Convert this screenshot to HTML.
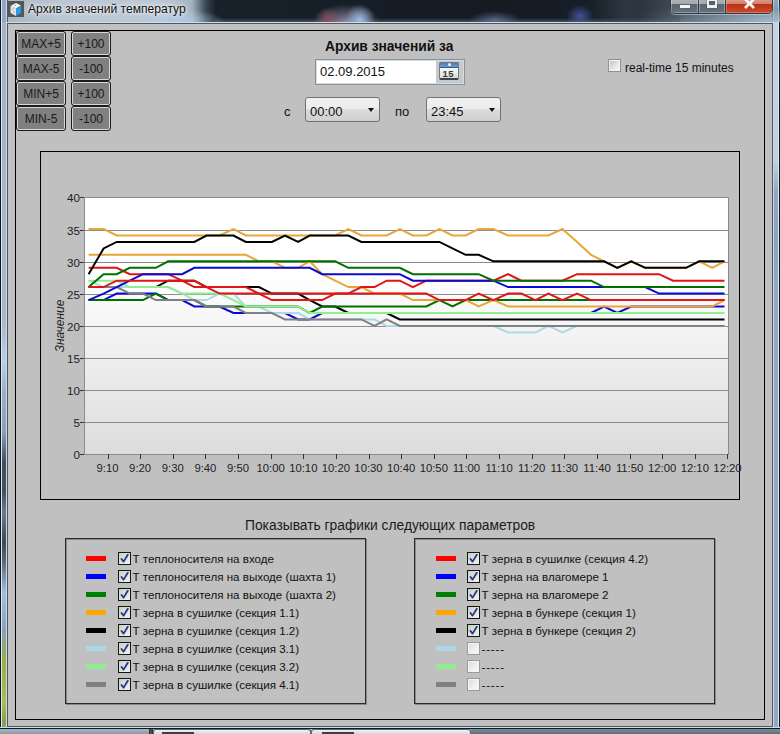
<!DOCTYPE html>
<html><head><meta charset="utf-8"><style>
*{box-sizing:border-box;margin:0;padding:0}
html,body{width:780px;height:734px;overflow:hidden}
body{position:relative;background:#c0c0c0;font-family:"Liberation Sans",sans-serif;color:#111}
.a{position:absolute}
.t{position:absolute;white-space:nowrap;line-height:1}
#title{left:0;top:0;width:780px;height:23px;background:radial-gradient(ellipse 45px 12px at 180px 21px,rgba(175,205,235,.85),rgba(175,205,235,0)),linear-gradient(90deg,#a8b4c0 0,#bac6d2 60px,#bcc8d4 165px,#a4b2c0 192px,#3a4652 206px,#18202a 216px,#141b23 500px,#18202a 640px,#5a6874 700px,#8a9cac 780px)}
#titlebot{left:215px;top:18px;width:565px;height:5px;background:linear-gradient(180deg,rgba(140,160,180,0) 0,rgba(150,170,190,.45) 100%)}
#lf{left:0;top:0;width:8px;height:734px;background:linear-gradient(90deg,#10161c 0,#10161c 1px,#d8e8f8 1px,#d8e8f8 2px,#90a8c4 2px,#90a8c4 6px,#c8d8e8 6px,#c8d8e8 7px,#50585e 7px,#50585e 8px)}
#rf{left:772px;top:0;width:8px;height:734px;background:linear-gradient(90deg,#50585e 0,#50585e 1px,#c8d8e8 1px,#c8d8e8 2px,#90a8c4 2px,#90a8c4 6px,#d8e8f8 6px,#d8e8f8 7px,#10161c 7px)}
#client{left:8px;top:23px;width:764px;height:704px;background:#c0c0c0;border-top:1px solid #505860}
#ctop{left:7px;top:22px;width:766px;height:1px;background:#d0dce8}
#outer{left:15px;top:30px;width:750px;height:690px;border:1px solid #000}
.btn{position:absolute;height:25px;border:1px solid #1c1c1c;border-radius:3px;background:#808080;box-shadow:inset 0 0 0 1px #d8d8d8;font-size:12px;text-align:center;line-height:23px;padding-top:1px;color:#1a1a1a}
.cb{width:13px;height:13px;border:1.5px solid #0e1a0e;background:linear-gradient(135deg,#c8d0c8,#f0f4f0)}
.cbu{width:13px;height:13px;border:1px solid #9a9a9a;box-shadow:inset 0 0 0 1px #f4f4f4;background:linear-gradient(135deg,#d8dadc,#f0f0f0 60%,#fafafa)}
</style></head><body>
<div id="title" class="a"></div><div id="titlebot" class="a"></div><div id="lf" class="a"></div><div id="rf" class="a"></div>
<div class="a" style="left:2px;top:22px;width:4px;height:705px;background:linear-gradient(180deg,#a4b4c4 0,#a8b8c8 300px,#b8d0e8 340px,#9ab0c8 370px,#8aa0b8 410px,#40505c 440px,#44525e 470px,#6a7c8c 490px,#3c4a58 520px,#5a6a78 540px,#a0c0e0 570px,#8aa0b8 610px,#98b040 640px,#a8c050 680px,#8aa048 700px,#8aa0b8 712px)"></div>
<div class="a" style="left:774px;top:22px;width:4px;height:705px;background:linear-gradient(180deg,#c4d4e4 0,#c0d0e0 140px,#90a8c0 170px,#8aa4bc 220px,#90a8c4 260px,#90a8c4 712px)"></div>
<div class="a" style="left:640px;top:0;width:140px;height:22px;background:radial-gradient(ellipse at 100% 100%,rgba(170,190,205,.9) 0,rgba(120,140,155,.5) 40%,rgba(20,28,36,0) 75%)"></div>
<div class="a" style="left:310px;top:2px;width:70px;height:20px;background:radial-gradient(ellipse 12px 10px at 18px 16px,rgba(150,80,90,.75),rgba(150,80,90,0)),radial-gradient(ellipse 15px 16px at 50px 18px,rgba(160,195,235,.95),rgba(160,195,235,0)),radial-gradient(ellipse 34px 17px at 36px 19px,rgba(150,140,170,.85),rgba(150,140,170,0))"></div>
<div class="a" style="left:460px;top:6px;width:70px;height:16px;background:radial-gradient(ellipse 26px 9px at 35px 14px,rgba(130,140,190,.6),rgba(130,140,190,0))"></div>
<div class="a" style="left:560px;top:2px;width:40px;height:20px;background:radial-gradient(ellipse 14px 11px at 20px 14px,rgba(80,100,190,.75),rgba(80,100,190,0))"></div>
<div class="a" style="left:590px;top:0;width:90px;height:22px;background:linear-gradient(90deg,rgba(70,80,90,0),rgba(70,80,90,.5) 40%,rgba(70,80,90,.3))"></div>
<div class="a" style="left:8px;top:1px;width:16px;height:16px;background:#545658"></div>
<svg class="a" style="left:8px;top:1px" width="16" height="16" viewBox="0 0 16 16">
<path d="M2.5 5 L8 2 L13 4.5 L8 7.5 Z" fill="#f4f4f4"/>
<path d="M2.5 5 L8 7.5 L8 15 L2.5 12 Z" fill="#e6e6e6"/>
<path d="M8 7.5 L13 4.5 L13 12 L8 15 Z" fill="#2a9be0"/>
<circle cx="5" cy="8" r=".6" fill="#777"/><circle cx="6" cy="11" r=".6" fill="#777"/><circle cx="7.5" cy="4.5" r=".6" fill="#777"/>
</svg>
<div class="t" style="left:28px;top:3px;font-size:12.1px;color:#111;text-shadow:0 0 6px #fff,0 0 3px #fff">Архив значений температур</div>
<div class="a" style="left:670px;top:-3px;width:103px;height:17px;border:1px solid #2e3a46;border-radius:0 0 5px 5px;overflow:hidden;box-shadow:0 1px 0 rgba(220,230,240,.5)">
 <div class="a" style="left:0;top:0;width:28px;height:15px;background:linear-gradient(180deg,#b0b6bc 0,#a0a8ae 6px,#5c6670 6.5px,#66707a 100%);border-right:1px solid #2e3a46;box-shadow:inset 0 0 0 1px rgba(255,255,255,.3)"></div>
 <div class="a" style="left:28px;top:0;width:27px;height:15px;background:linear-gradient(180deg,#b0b6bc 0,#a0a8ae 6px,#5c6670 6.5px,#66707a 100%);border-right:1px solid #2e3a46;box-shadow:inset 0 0 0 1px rgba(255,255,255,.3)"></div>
 <div class="a" style="left:55px;top:0;width:48px;height:15px;background:linear-gradient(180deg,#e0a090 0,#d08068 6px,#b83418 6.5px,#d04828 100%);box-shadow:inset 0 0 0 1px rgba(255,200,180,.35)"></div>
</div>
<div class="a" style="left:680px;top:5px;width:10px;height:3px;background:#f4f4f4;box-shadow:0 0 1px #333"></div>
<div class="a" style="left:707px;top:-1px;width:10px;height:9px;border:2px solid #f0f0f0;border-bottom-width:3px;background:#56606a;box-shadow:0 0 1px #333"></div>
<svg class="a" style="left:743px;top:-2px" width="13" height="11" viewBox="0 0 13 11"><path d="M2 1 L11 10 M11 1 L2 10" stroke="#f8f8f8" stroke-width="2.6"/></svg>
<div id="ctop" class="a"></div><div id="client" class="a"></div><div id="outer" class="a"></div>

<div class="btn" style="left:16px;top:31px;width:50px">MAX+5</div><div class="btn" style="left:71px;top:31px;width:40px">+100</div>
<div class="btn" style="left:16px;top:56px;width:50px">MAX-5</div><div class="btn" style="left:71px;top:56px;width:40px">-100</div>
<div class="btn" style="left:16px;top:81px;width:50px">MIN+5</div><div class="btn" style="left:71px;top:81px;width:40px">+100</div>
<div class="btn" style="left:16px;top:106px;width:50px">MIN-5</div><div class="btn" style="left:71px;top:106px;width:40px">-100</div>

<div class="t" style="left:325px;top:40px;font-size:13.8px;font-weight:bold;color:#111">Архив значений за</div>
<div class="a" style="left:315px;top:59px;width:150px;height:26px;border:1px solid #8494a4;background:#c6cacd;box-shadow:inset 0 0 0 1px #d8dcdf"></div>
<div class="a" style="left:317px;top:61px;width:119px;height:22px;background:#fff"></div>
<div class="t" style="left:320px;top:65px;font-size:13px">02.09.2015</div>
<div class="a" style="left:439px;top:62px;width:20px;height:18px;border:1px solid #707880;border-bottom:2px solid #3c4248;border-radius:2px;background:linear-gradient(180deg,#4a7cb8 0,#6a9ad0 4px,#3a5a80 4px,#3a5a80 5px,#f8f8f8 5px,#dcdcdc 100%)"></div>
<div class="a" style="left:448px;top:63px;width:3px;height:3px;border-radius:50%;background:#f0f4f8"></div>
<div class="t" style="left:442.5px;top:69px;font-size:9.5px;font-weight:bold;color:#3a3a3a;letter-spacing:.5px">15</div>
<div class="t" style="left:284px;top:105px;font-size:13px">с</div>
<div class="a" style="left:305px;top:97px;width:75px;height:25px;border:1px solid #707070;border-radius:3px;background:linear-gradient(180deg,#f2f2f2 0,#ebebeb 50%,#dddddd 50%,#cfcfcf 100%)"></div>
<div class="t" style="left:310px;top:105px;font-size:13px">00:00</div>
<div class="a" style="left:368px;top:108px;width:0;height:0;border-left:3.5px solid transparent;border-right:3.5px solid transparent;border-top:4px solid #111"></div>
<div class="t" style="left:395px;top:105px;font-size:13px">по</div>
<div class="a" style="left:426px;top:97px;width:75px;height:25px;border:1px solid #707070;border-radius:3px;background:linear-gradient(180deg,#f2f2f2 0,#ebebeb 50%,#dddddd 50%,#cfcfcf 100%)"></div>
<div class="t" style="left:431px;top:105px;font-size:13px">23:45</div>
<div class="a" style="left:489px;top:108px;width:0;height:0;border-left:3.5px solid transparent;border-right:3.5px solid transparent;border-top:4px solid #111"></div>
<div class="a" style="left:608px;top:59px;width:13px;height:13px;border:1px solid #8e8f8f;box-shadow:inset 0 0 0 1px #f4f4f4;background:linear-gradient(135deg,#b8bcc0,#e8eaec 60%,#f8f8f8)"></div>
<div class="t" style="left:625px;top:61.5px;font-size:12px">real-time 15 minutes</div>
<div class="a" style="left:40px;top:151px;width:700px;height:349px;border:1px solid #000"></div>

<svg class="a" style="left:0;top:0" width="780" height="734" shape-rendering="crispEdges">
<defs><linearGradient id="bg" x1="0" y1="0" x2="0" y2="1"><stop offset="0" stop-color="#fff"/><stop offset="0.30" stop-color="#fff"/><stop offset="1" stop-color="#dcdcdc"/></linearGradient></defs>
<rect x="85" y="197" width="643" height="257" fill="url(#bg)"/>
<line x1="84" y1="454.5" x2="729" y2="454.5" stroke="#8c8c8c"/>
<line x1="80" y1="454.5" x2="84" y2="454.5" stroke="#333"/>
<line x1="84" y1="422.5" x2="729" y2="422.5" stroke="#8c8c8c"/>
<line x1="80" y1="422.5" x2="84" y2="422.5" stroke="#333"/>
<line x1="84" y1="390.5" x2="729" y2="390.5" stroke="#8c8c8c"/>
<line x1="80" y1="390.5" x2="84" y2="390.5" stroke="#333"/>
<line x1="84" y1="358.5" x2="729" y2="358.5" stroke="#8c8c8c"/>
<line x1="80" y1="358.5" x2="84" y2="358.5" stroke="#333"/>
<line x1="84" y1="326.5" x2="729" y2="326.5" stroke="#8c8c8c"/>
<line x1="80" y1="326.5" x2="84" y2="326.5" stroke="#333"/>
<line x1="84" y1="294.5" x2="729" y2="294.5" stroke="#8c8c8c"/>
<line x1="80" y1="294.5" x2="84" y2="294.5" stroke="#333"/>
<line x1="84" y1="262.5" x2="729" y2="262.5" stroke="#8c8c8c"/>
<line x1="80" y1="262.5" x2="84" y2="262.5" stroke="#333"/>
<line x1="84" y1="230.5" x2="729" y2="230.5" stroke="#8c8c8c"/>
<line x1="80" y1="230.5" x2="84" y2="230.5" stroke="#333"/>
<line x1="84" y1="197.5" x2="729" y2="197.5" stroke="#8c8c8c"/>
<line x1="80" y1="197.5" x2="84" y2="197.5" stroke="#333"/>
<line x1="84.5" y1="197" x2="84.5" y2="455" stroke="#8c8c8c"/>
<line x1="728.5" y1="197" x2="728.5" y2="455" stroke="#8c8c8c"/>
<line x1="108.5" y1="454" x2="108.5" y2="459" stroke="#333"/>
<line x1="140.5" y1="454" x2="140.5" y2="459" stroke="#333"/>
<line x1="173.5" y1="454" x2="173.5" y2="459" stroke="#333"/>
<line x1="205.5" y1="454" x2="205.5" y2="459" stroke="#333"/>
<line x1="238.5" y1="454" x2="238.5" y2="459" stroke="#333"/>
<line x1="271.5" y1="454" x2="271.5" y2="459" stroke="#333"/>
<line x1="303.5" y1="454" x2="303.5" y2="459" stroke="#333"/>
<line x1="336.5" y1="454" x2="336.5" y2="459" stroke="#333"/>
<line x1="369.5" y1="454" x2="369.5" y2="459" stroke="#333"/>
<line x1="401.5" y1="454" x2="401.5" y2="459" stroke="#333"/>
<line x1="434.5" y1="454" x2="434.5" y2="459" stroke="#333"/>
<line x1="466.5" y1="454" x2="466.5" y2="459" stroke="#333"/>
<line x1="499.5" y1="454" x2="499.5" y2="459" stroke="#333"/>
<line x1="532.5" y1="454" x2="532.5" y2="459" stroke="#333"/>
<line x1="564.5" y1="454" x2="564.5" y2="459" stroke="#333"/>
<line x1="597.5" y1="454" x2="597.5" y2="459" stroke="#333"/>
<line x1="630.5" y1="454" x2="630.5" y2="459" stroke="#333"/>
<line x1="662.5" y1="454" x2="662.5" y2="459" stroke="#333"/>
<line x1="695.5" y1="454" x2="695.5" y2="459" stroke="#333"/>
<line x1="727.5" y1="454" x2="727.5" y2="459" stroke="#333"/>
</svg>
<div class="t" style="right:700px;top:449px;font-size:11.6px;color:#222">0</div>
<div class="t" style="right:700px;top:417px;font-size:11.6px;color:#222">5</div>
<div class="t" style="right:700px;top:385px;font-size:11.6px;color:#222">10</div>
<div class="t" style="right:700px;top:353px;font-size:11.6px;color:#222">15</div>
<div class="t" style="right:700px;top:321px;font-size:11.6px;color:#222">20</div>
<div class="t" style="right:700px;top:289px;font-size:11.6px;color:#222">25</div>
<div class="t" style="right:700px;top:257px;font-size:11.6px;color:#222">30</div>
<div class="t" style="right:700px;top:225px;font-size:11.6px;color:#222">35</div>
<div class="t" style="right:700px;top:192px;font-size:11.6px;color:#222">40</div>
<div class="t" style="left:77.5px;width:60px;text-align:center;top:463px;font-size:11.3px;color:#222">9:10</div>
<div class="t" style="left:110.1px;width:60px;text-align:center;top:463px;font-size:11.3px;color:#222">9:20</div>
<div class="t" style="left:142.8px;width:60px;text-align:center;top:463px;font-size:11.3px;color:#222">9:30</div>
<div class="t" style="left:175.4px;width:60px;text-align:center;top:463px;font-size:11.3px;color:#222">9:40</div>
<div class="t" style="left:208.0px;width:60px;text-align:center;top:463px;font-size:11.3px;color:#222">9:50</div>
<div class="t" style="left:240.6px;width:60px;text-align:center;top:463px;font-size:11.3px;color:#222">10:00</div>
<div class="t" style="left:273.3px;width:60px;text-align:center;top:463px;font-size:11.3px;color:#222">10:10</div>
<div class="t" style="left:305.9px;width:60px;text-align:center;top:463px;font-size:11.3px;color:#222">10:20</div>
<div class="t" style="left:338.5px;width:60px;text-align:center;top:463px;font-size:11.3px;color:#222">10:30</div>
<div class="t" style="left:371.2px;width:60px;text-align:center;top:463px;font-size:11.3px;color:#222">10:40</div>
<div class="t" style="left:403.8px;width:60px;text-align:center;top:463px;font-size:11.3px;color:#222">10:50</div>
<div class="t" style="left:436.4px;width:60px;text-align:center;top:463px;font-size:11.3px;color:#222">11:00</div>
<div class="t" style="left:469.1px;width:60px;text-align:center;top:463px;font-size:11.3px;color:#222">11:10</div>
<div class="t" style="left:501.7px;width:60px;text-align:center;top:463px;font-size:11.3px;color:#222">11:20</div>
<div class="t" style="left:534.3px;width:60px;text-align:center;top:463px;font-size:11.3px;color:#222">11:30</div>
<div class="t" style="left:567.0px;width:60px;text-align:center;top:463px;font-size:11.3px;color:#222">11:40</div>
<div class="t" style="left:599.6px;width:60px;text-align:center;top:463px;font-size:11.3px;color:#222">11:50</div>
<div class="t" style="left:632.2px;width:60px;text-align:center;top:463px;font-size:11.3px;color:#222">12:00</div>
<div class="t" style="left:664.8px;width:60px;text-align:center;top:463px;font-size:11.3px;color:#222">12:10</div>
<div class="t" style="left:697.5px;width:60px;text-align:center;top:463px;font-size:11.3px;color:#222">12:20</div>
<div class="t" style="left:60px;top:326px;font-size:12px;font-style:italic;color:#222;transform:translate(-50%,-50%) rotate(-90deg)">Значение</div>
<svg class="a" style="left:0;top:0" width="780" height="734"><polyline points="88.6,287.1 103.6,287.1 116.7,287.1 129.8,287.1 142.9,287.1 155.9,287.1 168.2,280.7 182.1,280.7 194.3,280.7 206.5,287.1 219.5,287.1 233.5,287.1 245.8,287.1 258.9,287.1 271.9,293.6 285.0,293.6 298.1,293.6 309.7,300.1 322.2,306.5 335.2,306.5 348.3,313.0 361.4,313.0 374.5,313.0 386.7,313.0 399.8,319.4 412.9,319.4 426.3,319.4 439.4,319.4 452.5,319.4 465.6,319.4 478.7,319.4 493.4,319.4 508.1,319.4 521.3,319.4 535.4,319.4 548.5,319.4 562.4,319.4 577.1,319.4 591.0,319.4 604.1,319.4 617.3,319.4 631.2,319.4 645.2,319.4 659.1,319.4 673.0,319.4 686.1,319.4 699.2,319.4 712.3,319.4 724.5,319.4" fill="none" stroke="#000000" stroke-width="2"/>
<polyline points="88.6,300.1 103.6,300.1 116.7,293.6 129.8,293.6 142.9,293.6 155.9,293.6 168.2,300.1 182.1,300.1 194.3,306.5 206.5,306.5 219.5,306.5 233.5,313.0 245.8,313.0 258.9,313.0 271.9,313.0 285.0,313.0 298.1,319.4 309.7,319.4 322.2,313.0 335.2,313.0 348.3,313.0 361.4,313.0 374.5,313.0 386.7,313.0 399.8,313.0 412.9,313.0 426.3,313.0 439.4,313.0 452.5,313.0 465.6,313.0 478.7,313.0 493.4,313.0 508.1,313.0 521.3,313.0 535.4,313.0 548.5,313.0 562.4,313.0 577.1,313.0 591.0,313.0 604.1,306.5 617.3,313.0 631.2,306.5 645.2,306.5 659.1,306.5 673.0,306.5 686.1,306.5 699.2,306.5 712.3,306.5 724.5,306.5" fill="none" stroke="#0A0AD0" stroke-width="2"/>
<polyline points="88.6,280.7 103.6,287.1 116.7,287.1 129.8,287.1 142.9,287.1 155.9,287.1 168.2,287.1 182.1,293.6 194.3,300.1 206.5,300.1 219.5,293.6 233.5,293.6 245.8,306.5 258.9,306.5 271.9,313.0 285.0,313.0 298.1,313.0 309.7,319.4 322.2,319.4 335.2,319.4 348.3,319.4 361.4,319.4 374.5,319.4 386.7,325.9 399.8,325.9 412.9,325.9 426.3,325.9 439.4,325.9 452.5,325.9 465.6,325.9 478.7,325.9 493.4,325.9 508.1,332.4 521.3,332.4 535.4,332.4 548.5,325.9 562.4,332.4 577.1,325.9 591.0,325.9 604.1,325.9 617.3,325.9 631.2,325.9 645.2,325.9 659.1,325.9 673.0,325.9 686.1,325.9 699.2,325.9 712.3,325.9 724.5,325.9" fill="none" stroke="#ADD8E6" stroke-width="2"/>
<polyline points="88.6,300.1 103.6,300.1 116.7,300.1 129.8,300.1 142.9,300.1 155.9,293.6 168.2,300.1 182.1,300.1 194.3,300.1 206.5,306.5 219.5,306.5 233.5,306.5 245.8,306.5 258.9,306.5 271.9,306.5 285.0,306.5 298.1,306.5 309.7,313.0 322.2,306.5 335.2,306.5 348.3,306.5 361.4,306.5 374.5,306.5 386.7,306.5 399.8,306.5 412.9,306.5 426.3,306.5 439.4,300.1 452.5,306.5 465.6,300.1 478.7,300.1 493.4,300.1 508.1,300.1 521.3,300.1 535.4,300.1 548.5,300.1 562.4,300.1 577.1,300.1 591.0,300.1 604.1,300.1 617.3,300.1 631.2,300.1 645.2,300.1 659.1,300.1 673.0,300.1 686.1,300.1 699.2,300.1 712.3,300.1 724.5,300.1" fill="none" stroke="#007000" stroke-width="2"/>
<polyline points="88.6,229.0 103.6,229.0 116.7,235.5 129.8,235.5 142.9,235.5 155.9,235.5 168.2,235.5 182.1,235.5 194.3,235.5 206.5,235.5 219.5,235.5 233.5,229.0 245.8,235.5 258.9,235.5 271.9,235.5 285.0,235.5 298.1,235.5 309.7,235.5 322.2,235.5 335.2,235.5 348.3,229.0 361.4,235.5 374.5,235.5 386.7,235.5 399.8,229.0 412.9,235.5 426.3,235.5 439.4,229.0 452.5,235.5 465.6,235.5 478.7,229.0 493.4,229.0 508.1,235.5 521.3,235.5 535.4,235.5 548.5,235.5 562.4,229.0 577.1,241.9 591.0,254.8 604.1,261.3 617.3,267.8 631.2,261.3 645.2,267.8 659.1,267.8 673.0,267.8 686.1,267.8 699.2,261.3 712.3,267.8 724.5,261.3" fill="none" stroke="#EAA53A" stroke-width="2"/>
<polyline points="88.6,287.1 103.6,287.1 116.7,287.1 129.8,293.6 142.9,293.6 155.9,300.1 168.2,300.1 182.1,300.1 194.3,300.1 206.5,306.5 219.5,306.5 233.5,306.5 245.8,313.0 258.9,313.0 271.9,313.0 285.0,319.4 298.1,319.4 309.7,319.4 322.2,319.4 335.2,319.4 348.3,319.4 361.4,319.4 374.5,325.9 386.7,319.4 399.8,325.9 412.9,325.9 426.3,325.9 439.4,325.9 452.5,325.9 465.6,325.9 478.7,325.9 493.4,325.9 508.1,325.9 521.3,325.9 535.4,325.9 548.5,325.9 562.4,325.9 577.1,325.9 591.0,325.9 604.1,325.9 617.3,325.9 631.2,325.9 645.2,325.9 659.1,325.9 673.0,325.9 686.1,325.9 699.2,325.9 712.3,325.9 724.5,325.9" fill="none" stroke="#808080" stroke-width="2"/>
<polyline points="88.6,280.7 103.6,280.7 116.7,280.7 129.8,287.1 142.9,287.1 155.9,287.1 168.2,287.1 182.1,293.6 194.3,293.6 206.5,293.6 219.5,293.6 233.5,300.1 245.8,306.5 258.9,306.5 271.9,306.5 285.0,306.5 298.1,306.5 309.7,313.0 322.2,313.0 335.2,313.0 348.3,313.0 361.4,313.0 374.5,313.0 386.7,313.0 399.8,313.0 412.9,313.0 426.3,313.0 439.4,313.0 452.5,313.0 465.6,313.0 478.7,313.0 493.4,313.0 508.1,313.0 521.3,313.0 535.4,313.0 548.5,313.0 562.4,313.0 577.1,313.0 591.0,313.0 604.1,313.0 617.3,313.0 631.2,313.0 645.2,313.0 659.1,313.0 673.0,313.0 686.1,313.0 699.2,313.0 712.3,313.0 724.5,313.0" fill="none" stroke="#90EE90" stroke-width="2"/>
<polyline points="88.6,254.8 103.6,254.8 116.7,254.8 129.8,254.8 142.9,254.8 155.9,254.8 168.2,254.8 182.1,254.8 194.3,254.8 206.5,254.8 219.5,254.8 233.5,254.8 245.8,254.8 258.9,261.3 271.9,261.3 285.0,267.8 298.1,267.8 309.7,261.3 322.2,274.2 335.2,280.7 348.3,287.1 361.4,287.1 374.5,293.6 386.7,293.6 399.8,293.6 412.9,300.1 426.3,300.1 439.4,300.1 452.5,300.1 465.6,300.1 478.7,306.5 493.4,300.1 508.1,306.5 521.3,306.5 535.4,306.5 548.5,306.5 562.4,306.5 577.1,306.5 591.0,306.5 604.1,306.5 617.3,306.5 631.2,306.5 645.2,306.5 659.1,306.5 673.0,306.5 686.1,306.5 699.2,306.5 712.3,306.5 724.5,300.1" fill="none" stroke="#EAA53A" stroke-width="2"/>
<polyline points="88.6,267.8 103.6,267.8 116.7,267.8 129.8,274.2 142.9,274.2 155.9,274.2 168.2,274.2 182.1,280.7 194.3,287.1 206.5,287.1 219.5,287.1 233.5,287.1 245.8,287.1 258.9,293.6 271.9,300.1 285.0,300.1 298.1,300.1 309.7,300.1 322.2,300.1 335.2,293.6 348.3,293.6 361.4,287.1 374.5,287.1 386.7,280.7 399.8,280.7 412.9,287.1 426.3,280.7 439.4,280.7 452.5,280.7 465.6,280.7 478.7,280.7 493.4,280.7 508.1,274.2 521.3,280.7 535.4,280.7 548.5,280.7 562.4,280.7 577.1,274.2 591.0,274.2 604.1,274.2 617.3,274.2 631.2,274.2 645.2,274.2 659.1,274.2 673.0,280.7 686.1,280.7 699.2,280.7 712.3,280.7 724.5,280.7" fill="none" stroke="#E01515" stroke-width="2"/>
<polyline points="88.6,300.1 103.6,293.6 116.7,287.1 129.8,280.7 142.9,274.2 155.9,274.2 168.2,274.2 182.1,274.2 194.3,267.8 206.5,267.8 219.5,267.8 233.5,267.8 245.8,267.8 258.9,267.8 271.9,267.8 285.0,267.8 298.1,267.8 309.7,267.8 322.2,274.2 335.2,274.2 348.3,274.2 361.4,274.2 374.5,274.2 386.7,274.2 399.8,274.2 412.9,280.7 426.3,280.7 439.4,280.7 452.5,280.7 465.6,280.7 478.7,280.7 493.4,280.7 508.1,287.1 521.3,287.1 535.4,287.1 548.5,287.1 562.4,287.1 577.1,287.1 591.0,287.1 604.1,287.1 617.3,287.1 631.2,287.1 645.2,287.1 659.1,293.6 673.0,293.6 686.1,293.6 699.2,293.6 712.3,293.6 724.5,293.6" fill="none" stroke="#0A0AD0" stroke-width="2"/>
<polyline points="88.6,287.1 103.6,274.2 116.7,274.2 129.8,267.8 142.9,267.8 155.9,267.8 168.2,261.3 182.1,261.3 194.3,261.3 206.5,261.3 219.5,261.3 233.5,261.3 245.8,261.3 258.9,261.3 271.9,261.3 285.0,261.3 298.1,261.3 309.7,261.3 322.2,261.3 335.2,261.3 348.3,267.8 361.4,267.8 374.5,267.8 386.7,267.8 399.8,267.8 412.9,274.2 426.3,274.2 439.4,274.2 452.5,274.2 465.6,274.2 478.7,274.2 493.4,280.7 508.1,280.7 521.3,280.7 535.4,280.7 548.5,280.7 562.4,280.7 577.1,280.7 591.0,280.7 604.1,287.1 617.3,287.1 631.2,287.1 645.2,287.1 659.1,287.1 673.0,287.1 686.1,287.1 699.2,287.1 712.3,287.1 724.5,287.1" fill="none" stroke="#007000" stroke-width="2"/>
<polyline points="88.6,287.1 103.6,287.1 116.7,280.7 129.8,280.7 142.9,280.7 155.9,280.7 168.2,280.7 182.1,280.7 194.3,280.7 206.5,287.1 219.5,293.6 233.5,293.6 245.8,293.6 258.9,293.6 271.9,293.6 285.0,293.6 298.1,293.6 309.7,293.6 322.2,293.6 335.2,293.6 348.3,293.6 361.4,293.6 374.5,293.6 386.7,293.6 399.8,293.6 412.9,293.6 426.3,293.6 439.4,300.1 452.5,300.1 465.6,300.1 478.7,293.6 493.4,300.1 508.1,293.6 521.3,293.6 535.4,300.1 548.5,293.6 562.4,300.1 577.1,293.6 591.0,300.1 604.1,300.1 617.3,300.1 631.2,300.1 645.2,300.1 659.1,300.1 673.0,300.1 686.1,300.1 699.2,300.1 712.3,300.1 724.5,300.1" fill="none" stroke="#E01515" stroke-width="2"/>
<polyline points="88.6,274.2 103.6,248.4 116.7,241.9 129.8,241.9 142.9,241.9 155.9,241.9 168.2,241.9 182.1,241.9 194.3,241.9 206.5,235.5 219.5,235.5 233.5,235.5 245.8,241.9 258.9,241.9 271.9,241.9 285.0,235.5 298.1,241.9 309.7,235.5 322.2,235.5 335.2,235.5 348.3,235.5 361.4,241.9 374.5,241.9 386.7,241.9 399.8,241.9 412.9,241.9 426.3,241.9 439.4,241.9 452.5,248.4 465.6,254.8 478.7,254.8 493.4,261.3 508.1,261.3 521.3,261.3 535.4,261.3 548.5,261.3 562.4,261.3 577.1,261.3 591.0,261.3 604.1,261.3 617.3,267.8 631.2,261.3 645.2,267.8 659.1,267.8 673.0,267.8 686.1,267.8 699.2,261.3 712.3,261.3 724.5,261.3" fill="none" stroke="#000000" stroke-width="2"/>
</svg>
<div class="t" style="left:245px;top:519px;font-size:13.8px;color:#1a1a1a">Показывать графики следующих параметров</div>
<div class="a" style="left:65px;top:538px;width:301px;height:166px;border:1px solid #2a2a2a;box-shadow:inset 1px 1px 0 #888, 1px 1px 0 #888"></div>
<div class="a" style="left:414px;top:538px;width:301px;height:166px;border:1px solid #2a2a2a;box-shadow:inset 1px 1px 0 #888, 1px 1px 0 #888"></div>
<div class="a" style="left:86px;top:555.5px;width:20px;height:5px;background:#ff0000"></div>
<div class="a cb" style="left:118px;top:552px"><svg width="9" height="9" viewBox="0 0 9 9" style="position:absolute;left:1px;top:1px"><path d="M1.5 5 L3.6 7.6 L7.8 0.8" fill="none" stroke="#2a3488" stroke-width="1.8" stroke-linecap="round" stroke-linejoin="round"/></svg></div>
<div class="t" style="left:132.5px;top:552.8px;font-size:11.6px;color:#111;letter-spacing:0">Т теплоносителя на входе</div>
<div class="a" style="left:86px;top:573.5px;width:20px;height:5px;background:#0000ff"></div>
<div class="a cb" style="left:118px;top:570px"><svg width="9" height="9" viewBox="0 0 9 9" style="position:absolute;left:1px;top:1px"><path d="M1.5 5 L3.6 7.6 L7.8 0.8" fill="none" stroke="#2a3488" stroke-width="1.8" stroke-linecap="round" stroke-linejoin="round"/></svg></div>
<div class="t" style="left:132.5px;top:570.8px;font-size:11.6px;color:#111;letter-spacing:0">Т теплоносителя на выходе (шахта 1)</div>
<div class="a" style="left:86px;top:591.5px;width:20px;height:5px;background:#008000"></div>
<div class="a cb" style="left:118px;top:588px"><svg width="9" height="9" viewBox="0 0 9 9" style="position:absolute;left:1px;top:1px"><path d="M1.5 5 L3.6 7.6 L7.8 0.8" fill="none" stroke="#2a3488" stroke-width="1.8" stroke-linecap="round" stroke-linejoin="round"/></svg></div>
<div class="t" style="left:132.5px;top:588.8px;font-size:11.6px;color:#111;letter-spacing:0">Т теплоносителя на выходе (шахта 2)</div>
<div class="a" style="left:86px;top:609.5px;width:20px;height:5px;background:#ffa500"></div>
<div class="a cb" style="left:118px;top:606px"><svg width="9" height="9" viewBox="0 0 9 9" style="position:absolute;left:1px;top:1px"><path d="M1.5 5 L3.6 7.6 L7.8 0.8" fill="none" stroke="#2a3488" stroke-width="1.8" stroke-linecap="round" stroke-linejoin="round"/></svg></div>
<div class="t" style="left:132.5px;top:606.8px;font-size:11.6px;color:#111;letter-spacing:0">Т зерна в сушилке (секция 1.1)</div>
<div class="a" style="left:86px;top:627.5px;width:20px;height:5px;background:#000000"></div>
<div class="a cb" style="left:118px;top:624px"><svg width="9" height="9" viewBox="0 0 9 9" style="position:absolute;left:1px;top:1px"><path d="M1.5 5 L3.6 7.6 L7.8 0.8" fill="none" stroke="#2a3488" stroke-width="1.8" stroke-linecap="round" stroke-linejoin="round"/></svg></div>
<div class="t" style="left:132.5px;top:624.8px;font-size:11.6px;color:#111;letter-spacing:0">Т зерна в сушилке (секция 1.2)</div>
<div class="a" style="left:86px;top:645.5px;width:20px;height:5px;background:#add8e6"></div>
<div class="a cb" style="left:118px;top:642px"><svg width="9" height="9" viewBox="0 0 9 9" style="position:absolute;left:1px;top:1px"><path d="M1.5 5 L3.6 7.6 L7.8 0.8" fill="none" stroke="#2a3488" stroke-width="1.8" stroke-linecap="round" stroke-linejoin="round"/></svg></div>
<div class="t" style="left:132.5px;top:642.8px;font-size:11.6px;color:#111;letter-spacing:0">Т зерна в сушилке (секция 3.1)</div>
<div class="a" style="left:86px;top:663.5px;width:20px;height:5px;background:#90ee90"></div>
<div class="a cb" style="left:118px;top:660px"><svg width="9" height="9" viewBox="0 0 9 9" style="position:absolute;left:1px;top:1px"><path d="M1.5 5 L3.6 7.6 L7.8 0.8" fill="none" stroke="#2a3488" stroke-width="1.8" stroke-linecap="round" stroke-linejoin="round"/></svg></div>
<div class="t" style="left:132.5px;top:660.8px;font-size:11.6px;color:#111;letter-spacing:0">Т зерна в сушилке (секция 3.2)</div>
<div class="a" style="left:86px;top:681.5px;width:20px;height:5px;background:#808080"></div>
<div class="a cb" style="left:118px;top:678px"><svg width="9" height="9" viewBox="0 0 9 9" style="position:absolute;left:1px;top:1px"><path d="M1.5 5 L3.6 7.6 L7.8 0.8" fill="none" stroke="#2a3488" stroke-width="1.8" stroke-linecap="round" stroke-linejoin="round"/></svg></div>
<div class="t" style="left:132.5px;top:678.8px;font-size:11.6px;color:#111;letter-spacing:0">Т зерна в сушилке (секция 4.1)</div>
<div class="a" style="left:435.5px;top:555.5px;width:20px;height:5px;background:#ff0000"></div>
<div class="a cb" style="left:467px;top:552px"><svg width="9" height="9" viewBox="0 0 9 9" style="position:absolute;left:1px;top:1px"><path d="M1.5 5 L3.6 7.6 L7.8 0.8" fill="none" stroke="#2a3488" stroke-width="1.8" stroke-linecap="round" stroke-linejoin="round"/></svg></div>
<div class="t" style="left:481.5px;top:552.8px;font-size:11.6px;color:#111;letter-spacing:0">Т зерна в сушилке (секция 4.2)</div>
<div class="a" style="left:435.5px;top:573.5px;width:20px;height:5px;background:#0000ff"></div>
<div class="a cb" style="left:467px;top:570px"><svg width="9" height="9" viewBox="0 0 9 9" style="position:absolute;left:1px;top:1px"><path d="M1.5 5 L3.6 7.6 L7.8 0.8" fill="none" stroke="#2a3488" stroke-width="1.8" stroke-linecap="round" stroke-linejoin="round"/></svg></div>
<div class="t" style="left:481.5px;top:570.8px;font-size:11.6px;color:#111;letter-spacing:0">Т зерна на влагомере 1</div>
<div class="a" style="left:435.5px;top:591.5px;width:20px;height:5px;background:#008000"></div>
<div class="a cb" style="left:467px;top:588px"><svg width="9" height="9" viewBox="0 0 9 9" style="position:absolute;left:1px;top:1px"><path d="M1.5 5 L3.6 7.6 L7.8 0.8" fill="none" stroke="#2a3488" stroke-width="1.8" stroke-linecap="round" stroke-linejoin="round"/></svg></div>
<div class="t" style="left:481.5px;top:588.8px;font-size:11.6px;color:#111;letter-spacing:0">Т зерна на влагомере 2</div>
<div class="a" style="left:435.5px;top:609.5px;width:20px;height:5px;background:#ffa500"></div>
<div class="a cb" style="left:467px;top:606px"><svg width="9" height="9" viewBox="0 0 9 9" style="position:absolute;left:1px;top:1px"><path d="M1.5 5 L3.6 7.6 L7.8 0.8" fill="none" stroke="#2a3488" stroke-width="1.8" stroke-linecap="round" stroke-linejoin="round"/></svg></div>
<div class="t" style="left:481.5px;top:606.8px;font-size:11.6px;color:#111;letter-spacing:0">Т зерна в бункере (секция 1)</div>
<div class="a" style="left:435.5px;top:627.5px;width:20px;height:5px;background:#000000"></div>
<div class="a cb" style="left:467px;top:624px"><svg width="9" height="9" viewBox="0 0 9 9" style="position:absolute;left:1px;top:1px"><path d="M1.5 5 L3.6 7.6 L7.8 0.8" fill="none" stroke="#2a3488" stroke-width="1.8" stroke-linecap="round" stroke-linejoin="round"/></svg></div>
<div class="t" style="left:481.5px;top:624.8px;font-size:11.6px;color:#111;letter-spacing:0">Т зерна в бункере (секция 2)</div>
<div class="a" style="left:435.5px;top:645.5px;width:20px;height:5px;background:#add8e6"></div>
<div class="a cbu" style="left:467px;top:642px"></div>
<div class="t" style="left:481.5px;top:642.8px;font-size:11.6px;color:#111;letter-spacing:0.8px">-----</div>
<div class="a" style="left:435.5px;top:663.5px;width:20px;height:5px;background:#90ee90"></div>
<div class="a cbu" style="left:467px;top:660px"></div>
<div class="t" style="left:481.5px;top:660.8px;font-size:11.6px;color:#111;letter-spacing:0.8px">-----</div>
<div class="a" style="left:435.5px;top:681.5px;width:20px;height:5px;background:#808080"></div>
<div class="a cbu" style="left:467px;top:678px"></div>
<div class="t" style="left:481.5px;top:678.8px;font-size:11.6px;color:#111;letter-spacing:0.8px">-----</div>

<div class="a" style="left:7px;top:726px;width:766px;height:1px;background:#505860"></div>
<div class="a" style="left:0;top:727px;width:780px;height:1px;background:#d0dce4"></div>
<div class="a" style="left:0;top:728px;width:780px;height:1px;background:#101820"></div>
<div class="a" style="left:0;top:729px;width:149px;height:5px;background:linear-gradient(180deg,#a8b8c4,#8898a4)"></div>
<div class="a" style="left:149px;top:729px;width:4px;height:5px;background:linear-gradient(90deg,#20282e,#4a5a66,#20282e)"></div>
<div class="a" style="left:153px;top:729px;width:158px;height:5px;border:1px solid #5a6670;border-bottom:0;border-radius:3px 3px 0 0;background:linear-gradient(180deg,#f0f2f4,#d4d8dc)"></div>
<div class="a" style="left:162px;top:732px;width:32px;height:2px;background:#3c3e40"></div>
<div class="a" style="left:311px;top:729px;width:160px;height:5px;border:1px solid #5a6670;border-bottom:0;border-radius:3px 3px 0 0;background:linear-gradient(180deg,#f0f2f4,#d4d8dc)"></div>
<div class="a" style="left:322px;top:732px;width:32px;height:2px;background:#3c3e40"></div>
<div class="a" style="left:471px;top:729px;width:309px;height:5px;background:linear-gradient(180deg,#7a8e9c,#5a6e7c)"></div>

</body></html>
